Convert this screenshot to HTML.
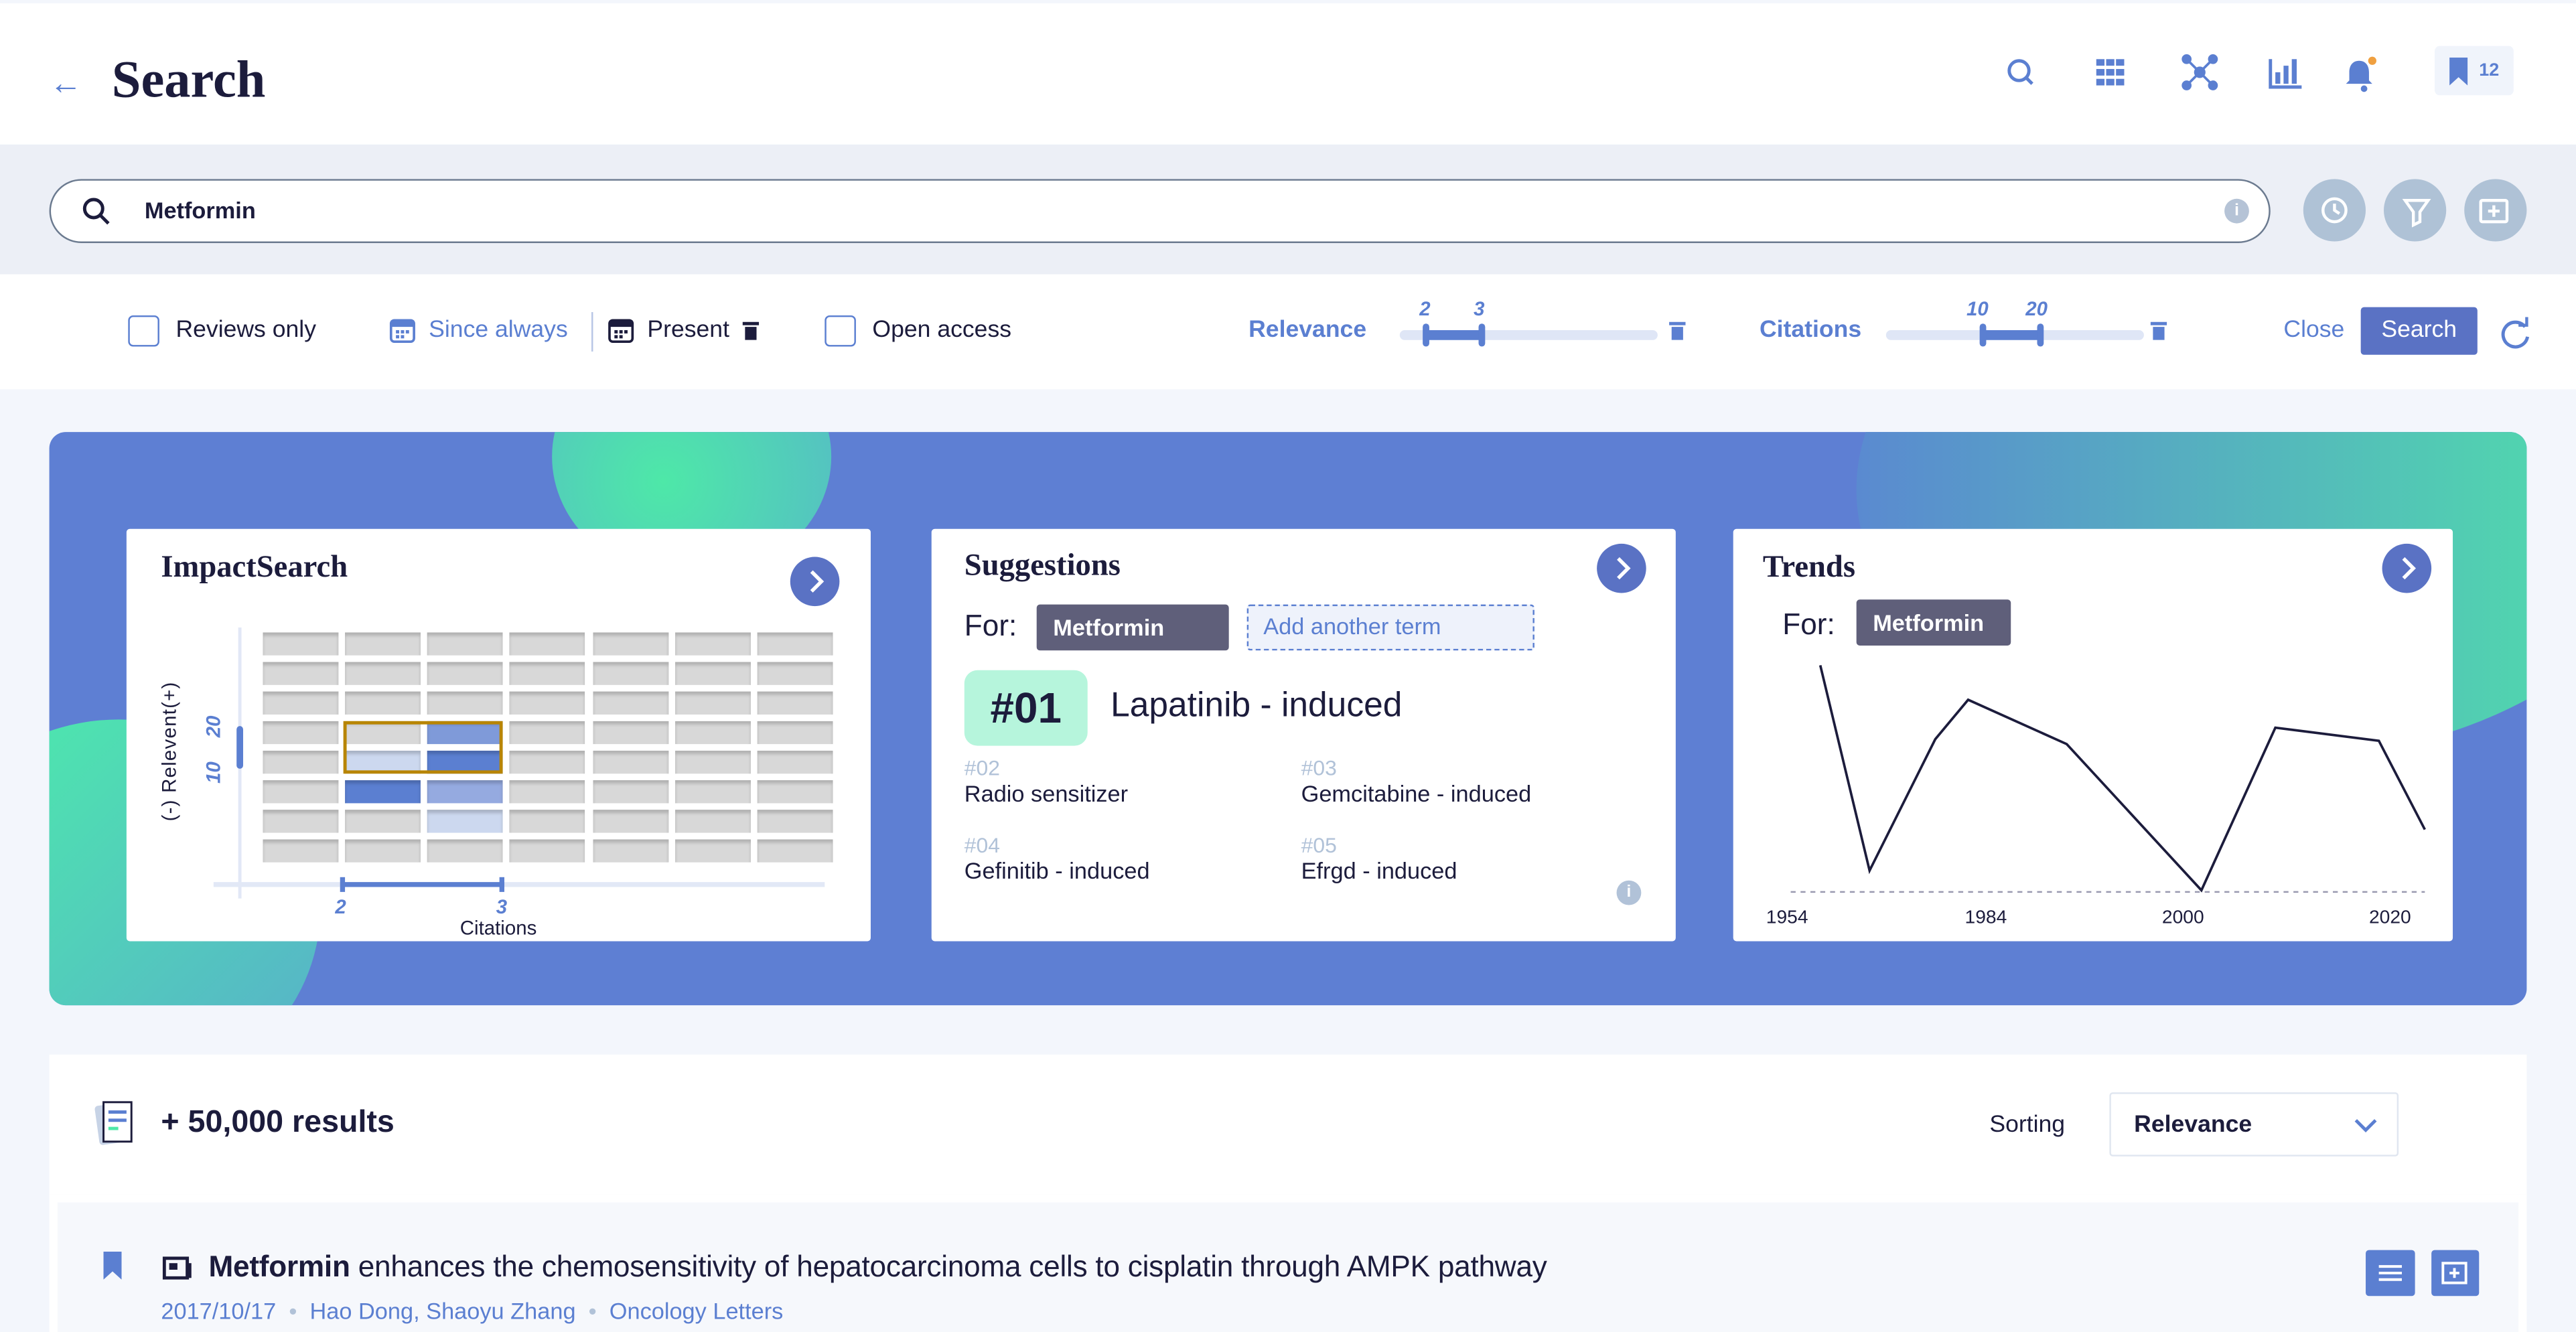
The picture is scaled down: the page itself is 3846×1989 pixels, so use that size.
<!DOCTYPE html>
<html><head><meta charset="utf-8">
<style>
*{box-sizing:border-box;margin:0;padding:0}
html,body{width:3846px;height:1989px;overflow:hidden;background:#f3f6fc}
#w{position:absolute;left:0;top:0;width:1568px;height:811px;transform:scale(2.4528);transform-origin:0 0;font-family:"Liberation Sans",sans-serif;color:#1c1c3c;background:#f3f6fc}
.a{position:absolute}
.serif{font-family:"Liberation Serif",serif;font-weight:bold}
.blue{color:#5b7fd1}
.cb{position:absolute;width:19px;height:19px;border:1.5px solid #5b7fd1;border-radius:3px;background:#fff}
.card{position:absolute;background:#fff;border-radius:2px;overflow:hidden}
.arrow{position:absolute;width:30px;height:30px;border-radius:50%;background:#5a72c4}
.cell{position:absolute;width:46px;height:14px;background:#d8d8d8;box-shadow:inset 0 2px 2px rgba(0,0,0,.18)}
.gb{position:absolute;width:38px;height:38px;border-radius:50%;background:#afc2d6}
</style></head><body><div id="w">
<!-- header -->
<div class="a" style="left:0;top:2px;width:1568px;height:86px;background:#fff"></div>
<div class="a blue" style="left:30px;top:40px;font-size:20px">&#8592;</div>
<div class="a serif" style="left:68px;top:30px;font-size:32px;color:#1c1c3c">Search</div>
<svg class="a" style="left:1218px;top:33px" width="320" height="24" viewBox="0 0 320 24" fill="none" stroke="#5b7fd1" stroke-width="2">
<circle cx="11" cy="10" r="6"/><path d="M15 14l4 4"/>
<g fill="#5b7fd1" stroke="none"><rect x="58" y="3" width="5" height="4"/><rect x="64" y="3" width="5" height="4"/><rect x="70" y="3" width="5" height="4"/><rect x="58" y="9" width="5" height="4"/><rect x="64" y="9" width="5" height="4"/><rect x="70" y="9" width="5" height="4"/><rect x="58" y="15" width="5" height="4"/><rect x="64" y="15" width="5" height="4"/><rect x="70" y="15" width="5" height="4"/></g>
<path d="M113 3l16 16M129 3l-16 16" stroke-width="1.5"/><g fill="#5b7fd1"><circle cx="121" cy="11" r="2.5"/><circle cx="113" cy="3" r="2"/><circle cx="129" cy="3" r="2"/><circle cx="113" cy="19" r="2"/><circle cx="129" cy="19" r="2"/></g>
<path d="M164 3v17h19"/><g fill="#5b7fd1" stroke="none"><rect x="167" y="11" width="3" height="7"/><rect x="172" y="7" width="3" height="11"/><rect x="177" y="3" width="3" height="15"/></g>
<path d="M218 4c-4 0-6 3-6 7v5l-2 2h16l-2-2v-5c0-4-2-7-6-7z" fill="#5b7fd1" stroke="none"/><circle cx="221" cy="21" r="2" fill="#5b7fd1" stroke="none"/><circle cx="226" cy="4" r="2.5" fill="#f0a040" stroke="none"/>
</svg>
<div class="a" style="left:1482px;top:28px;width:48px;height:30px;background:#f0f4fb;border-radius:3px"></div>
<svg class="a" style="left:1490px;top:35px" width="14" height="17"><path d="M1 0h11v17l-5.5-5L1 17z" fill="#5b7fd1"/></svg>
<div class="a blue" style="left:1509px;top:37px;font-size:11px;font-weight:bold">12</div>
<!-- search band -->
<div class="a" style="left:0;top:88px;width:1568px;height:79px;background:#eceff6"></div>
<div class="a" style="left:30px;top:109px;width:1352px;height:39px;border:1.5px solid #6b7a8f;border-radius:20px;background:#fff"></div>
<svg class="a" style="left:50px;top:120px" width="18" height="18" fill="none" stroke="#1c1c3c" stroke-width="2"><circle cx="7" cy="7" r="5.5"/><path d="M11 11l5 5"/></svg>
<div class="a" style="left:88px;top:120px;font-size:14px;font-weight:bold">Metformin</div>
<div class="a" style="left:1354px;top:121px;width:15px;height:15px;border-radius:50%;background:#b5c3d6;color:#fff;font-size:10px;text-align:center;line-height:15px;font-weight:bold">i</div>
<div class="gb" style="left:1402px;top:109px"></div><div class="gb" style="left:1451px;top:109px"></div><div class="gb" style="left:1500px;top:109px"></div>
<svg class="a" style="left:1402px;top:109px" width="140" height="38" fill="none" stroke="#fff" stroke-width="1.8"><circle cx="19" cy="19" r="7"/><path d="M19 15v4l3 2"/><path d="M62 13h14l-5 7v6l-4 2v-8z"/><rect x="108" y="13" width="16" height="13" rx="1"/><path d="M116 16v7M112.5 19.5h7"/></svg>
<!-- filter row -->
<div class="a" style="left:0;top:167px;width:1568px;height:70px;background:#fff"></div>
<div class="cb" style="left:78px;top:192px"></div>
<div class="a" style="left:107px;top:193px;font-size:14.5px">Reviews only</div>
<svg class="a" style="left:237px;top:193px" width="16" height="16" fill="#5b7fd1"><rect x="1" y="2" width="14" height="13" rx="2" fill="none" stroke="#5b7fd1" stroke-width="1.5"/><rect x="1" y="2" width="14" height="4"/><rect x="4" y="8" width="2" height="2"/><rect x="7" y="8" width="2" height="2"/><rect x="10" y="8" width="2" height="2"/><rect x="4" y="11" width="2" height="2"/><rect x="7" y="11" width="2" height="2"/></svg>
<div class="a blue" style="left:261px;top:193px;font-size:14.5px">Since always</div>
<div class="a" style="left:360px;top:190px;width:1px;height:24px;background:#b8c6e6"></div>
<svg class="a" style="left:370px;top:193px" width="16" height="16" fill="#1c1c3c"><rect x="1" y="2" width="14" height="13" rx="2" fill="none" stroke="#1c1c3c" stroke-width="1.5"/><rect x="1" y="2" width="14" height="4"/><rect x="4" y="8" width="2" height="2"/><rect x="7" y="8" width="2" height="2"/><rect x="10" y="8" width="2" height="2"/><rect x="4" y="11" width="2" height="2"/><rect x="7" y="11" width="2" height="2"/></svg>
<div class="a" style="left:394px;top:193px;font-size:14.5px">Present</div>
<svg class="a" style="left:452px;top:195px" width="10" height="12" fill="#1c1c3c"><rect x="0" y="1" width="10" height="2"/><rect x="1.5" y="4" width="7" height="8"/></svg>
<div class="cb" style="left:502px;top:192px"></div>
<div class="a" style="left:531px;top:193px;font-size:14.5px">Open access</div>
<div class="a blue" style="left:760px;top:193px;font-size:14.5px;font-weight:bold">Relevance</div>
<div class="a blue" style="left:864px;top:181px;font-size:12px;font-style:italic;font-weight:bold">2</div>
<div class="a blue" style="left:897px;top:181px;font-size:12px;font-style:italic;font-weight:bold">3</div>
<div class="a" style="left:852px;top:201px;width:157px;height:6px;background:#dfe6f6;border-radius:3px"></div>
<div class="a" style="left:868px;top:201px;width:35px;height:6px;background:#5b7fd1"></div>
<div class="a" style="left:866px;top:197px;width:4px;height:14px;background:#5b7fd1;border-radius:2px"></div>
<div class="a" style="left:900px;top:197px;width:4px;height:14px;background:#5b7fd1;border-radius:2px"></div>
<svg class="a" style="left:1016px;top:195px" width="10" height="12" fill="#5b7fd1"><rect x="0" y="1" width="10" height="2"/><rect x="1.5" y="4" width="7" height="8"/></svg>
<div class="a blue" style="left:1071px;top:193px;font-size:14.5px;font-weight:bold">Citations</div>
<div class="a blue" style="left:1197px;top:181px;font-size:12px;font-style:italic;font-weight:bold">10</div>
<div class="a blue" style="left:1233px;top:181px;font-size:12px;font-style:italic;font-weight:bold">20</div>
<div class="a" style="left:1148px;top:201px;width:157px;height:6px;background:#dfe6f6;border-radius:3px"></div>
<div class="a" style="left:1207px;top:201px;width:35px;height:6px;background:#5b7fd1"></div>
<div class="a" style="left:1205px;top:197px;width:4px;height:14px;background:#5b7fd1;border-radius:2px"></div>
<div class="a" style="left:1240px;top:197px;width:4px;height:14px;background:#5b7fd1;border-radius:2px"></div>
<svg class="a" style="left:1309px;top:195px" width="10" height="12" fill="#5b7fd1"><rect x="0" y="1" width="10" height="2"/><rect x="1.5" y="4" width="7" height="8"/></svg>
<div class="a blue" style="left:1390px;top:193px;font-size:14.5px">Close</div>
<div class="a" style="left:1437px;top:187px;width:71px;height:29px;background:#5a72c4;border-radius:2px;color:#fff;font-size:14.5px;text-align:center;line-height:29px">Search</div>
<svg class="a" style="left:1521px;top:193px" width="20" height="20" fill="none" stroke="#5b7fd1" stroke-width="2"><path d="M16 6A7.5 7.5 0 1 0 17.5 12"/><path d="M12 5h5V0" stroke-width="1.8"/></svg>
<!-- banner -->
<div class="a" style="left:30px;top:263px;width:1508px;height:349px;background:#5e7fd3;border-radius:10px;overflow:hidden">
 <div class="a" style="left:306px;top:-60px;width:170px;height:150px;border-radius:50%;background:radial-gradient(circle at 40% 60%,#4ee8a8,#56b8c8)"></div>
 <div class="a" style="left:-80px;top:175px;width:245px;height:230px;border-radius:50%;background:linear-gradient(135deg,#4cefa9,#58aecb)"></div>
 <div class="a" style="left:1100px;top:-130px;width:500px;height:330px;border-radius:50%;background:linear-gradient(90deg,#5a8ad0,#4fe4a8)"></div>
</div>
<!-- card 1 -->
<div class="card" style="left:77px;top:322px;width:453px;height:251px">
 <div class="a serif" style="left:21px;top:13px;font-size:19px">ImpactSearch</div>
 <div class="arrow" style="left:404px;top:17px"></div>
 <svg class="a" style="left:404px;top:17px" width="30" height="30" fill="none" stroke="#fff" stroke-width="2.2"><path d="M13 9l6 6-6 6"/></svg>
</div>
<div class="a" style="left:96px;top:500px;width:20px;transform-origin:0 0;transform:rotate(-90deg);white-space:nowrap;font-size:12px;letter-spacing:.5px">(-) Relevent(+)</div>
<div class="a blue" style="left:123px;top:477px;transform-origin:0 0;transform:rotate(-90deg);font-size:12px;font-style:italic;font-weight:bold">10</div>
<div class="a blue" style="left:123px;top:449px;transform-origin:0 0;transform:rotate(-90deg);font-size:12px;font-style:italic;font-weight:bold">20</div>
<div class="a" style="left:145px;top:382px;width:2px;height:165px;background:#e2e8f6"></div>
<div class="a" style="left:144px;top:442px;width:4px;height:26px;background:#5b7fd1;border-radius:2px"></div>
<div class="a" style="left:130px;top:537px;width:372px;height:3px;background:#e2e8f6"></div>
<div class="a" style="left:208px;top:537px;width:99px;height:3px;background:#5b7fd1"></div>
<div class="a" style="left:207px;top:534px;width:3px;height:9px;background:#5b7fd1"></div>
<div class="a" style="left:304px;top:534px;width:3px;height:9px;background:#5b7fd1"></div>
<div class="a blue" style="left:204px;top:545px;font-size:12px;font-style:italic;font-weight:bold">2</div>
<div class="a blue" style="left:302px;top:545px;font-size:12px;font-style:italic;font-weight:bold">3</div>
<div class="a" style="left:280px;top:558px;font-size:12px">Citations</div>
<div id="grid"></div>
<div class="a" style="left:209px;top:439px;width:97px;height:32px;border:2.5px solid #b88500"></div>
<!-- card 2 -->
<div class="card" style="left:567px;top:322px;width:453px;height:251px">
 <div class="a serif" style="left:20px;top:12px;font-size:19px">Suggestions</div>
 <div class="arrow" style="left:405px;top:9px"></div>
 <svg class="a" style="left:405px;top:9px" width="30" height="30" fill="none" stroke="#fff" stroke-width="2.2"><path d="M13 9l6 6-6 6"/></svg>
 <div class="a" style="left:20px;top:49px;font-size:18px">For:</div>
 <div class="a" style="left:64px;top:46px;width:117px;height:28px;background:#5f5f7a;border-radius:2px;color:#fff;font-size:14px;font-weight:bold;line-height:28px;padding-left:10px">Metformin</div>
 <div class="a blue" style="left:192px;top:46px;width:175px;height:28px;background:#eef2fb;border:1.5px dashed #5b7fd1;border-radius:2px;font-size:14px;line-height:25px;padding-left:9px">Add another term</div>
 <div class="a" style="left:20px;top:86px;width:75px;height:46px;background:#b6f5dc;border-radius:8px;font-size:26px;font-weight:bold;text-align:center;line-height:46px">#01</div>
 <div class="a" style="left:109px;top:96px;font-size:21px">Lapatinib - induced</div>
 <div class="a" style="left:20px;top:138px;font-size:13px;color:#b1c2d8">#02</div>
 <div class="a" style="left:20px;top:153px;font-size:14px">Radio sensitizer</div>
 <div class="a" style="left:225px;top:138px;font-size:13px;color:#b1c2d8">#03</div>
 <div class="a" style="left:225px;top:153px;font-size:14px">Gemcitabine - induced</div>
 <div class="a" style="left:20px;top:185px;font-size:13px;color:#b1c2d8">#04</div>
 <div class="a" style="left:20px;top:200px;font-size:14px">Gefinitib - induced</div>
 <div class="a" style="left:225px;top:185px;font-size:13px;color:#b1c2d8">#05</div>
 <div class="a" style="left:225px;top:200px;font-size:14px">Efrgd - induced</div>
 <div class="a" style="left:417px;top:214px;width:15px;height:15px;border-radius:50%;background:#b1c2d8;color:#fff;font-size:10px;font-weight:bold;text-align:center;line-height:15px">i</div>
</div>
<!-- card 3 -->
<div class="card" style="left:1055px;top:322px;width:438px;height:251px">
 <div class="a serif" style="left:18px;top:13px;font-size:19px">Trends</div>
 <div class="arrow" style="left:395px;top:9px"></div>
 <svg class="a" style="left:395px;top:9px" width="30" height="30" fill="none" stroke="#fff" stroke-width="2.2"><path d="M13 9l6 6-6 6"/></svg>
 <div class="a" style="left:30px;top:48px;font-size:18px">For:</div>
 <div class="a" style="left:75px;top:43px;width:94px;height:28px;background:#5f5f7a;border-radius:2px;color:#fff;font-size:14px;font-weight:bold;line-height:28px;padding-left:10px">Metformin</div>
 <svg class="a" style="left:0;top:0" width="438" height="251" fill="none"><path d="M35 221H421" stroke="#9a9ab0" stroke-width="1" stroke-dasharray="3 3"/><polyline points="53,83 83,208 123,128 143,104 203,131 285,220 330,121 393,129 421,183" stroke="#1c1c3c" stroke-width="1.5"/></svg>
 <div class="a" style="left:20px;top:231px;font-size:11.5px">1954</div>
 <div class="a" style="left:141px;top:231px;font-size:11.5px">1984</div>
 <div class="a" style="left:261px;top:231px;font-size:11.5px">2000</div>
 <div class="a" style="left:387px;top:231px;font-size:11.5px">2020</div>
</div>
<!-- results -->
<div class="a" style="left:30px;top:642px;width:1508px;height:85px;background:#fff"></div>
<div class="a" style="left:30px;top:727px;width:1508px;height:84px;background:#fff"></div>
<svg class="a" style="left:57px;top:668px" width="28" height="32"><rect x="2" y="4" width="20" height="24" rx="2" fill="#c7d3e6" transform="rotate(-8 12 16)"/><rect x="6" y="3" width="17" height="24" fill="#fff" stroke="#1c1c3c" stroke-width="1.2"/><rect x="9" y="8" width="11" height="2" fill="#5b7fd1"/><rect x="9" y="13" width="11" height="2" fill="#5b7fd1"/><rect x="9" y="18" width="6" height="2" fill="#4ee8a8"/></svg>
<div class="a" style="left:98px;top:673px;font-size:19px;font-weight:bold">+ 50,000 results</div>
<div class="a" style="left:1211px;top:677px;font-size:14.5px">Sorting</div>
<div class="a" style="left:1284px;top:665px;width:176px;height:39px;border:1.5px solid #e0e6f0;border-radius:2px;background:#fff"></div>
<div class="a" style="left:1299px;top:677px;font-size:14.5px;font-weight:bold">Relevance</div>
<svg class="a" style="left:1433px;top:680px" width="14" height="10" fill="none" stroke="#5b7fd1" stroke-width="2"><path d="M1 2l6 6 6-6"/></svg>
<div class="a" style="left:35px;top:732px;width:1498px;height:79px;background:#f6f8fc"></div>
<svg class="a" style="left:62px;top:762px" width="14" height="17"><path d="M1 0h11v17l-5.5-5L1 17z" fill="#5b7fd1"/></svg>
<svg class="a" style="left:99px;top:765px" width="18" height="14"><rect x="1" y="1" width="14" height="12" fill="none" stroke="#1c1c3c" stroke-width="2"/><rect x="4" y="4" width="5" height="4" fill="#1c1c3c"/><rect x="15" y="4" width="2.5" height="9" fill="#1c1c3c"/></svg>
<div class="a" style="left:127px;top:761px;font-size:18px;letter-spacing:-0.1px"><b>Metformin</b> enhances the chemosensitivity of hepatocarcinoma cells to cisplatin through AMPK pathway</div>
<div class="a blue" style="left:98px;top:790px;font-size:14px">2017/10/17 <span style="color:#b1c2d8">&nbsp;•&nbsp;</span> Hao Dong, Shaoyu Zhang <span style="color:#b1c2d8">&nbsp;•&nbsp;</span> Oncology Letters</div>
<div class="a" style="left:1440px;top:761px;width:30px;height:28px;background:#5b7fd1;border-radius:2px"></div>
<div class="a" style="left:1480px;top:761px;width:29px;height:28px;background:#5b7fd1;border-radius:2px"></div>
<svg class="a" style="left:1440px;top:761px" width="70" height="28" fill="none" stroke="#fff" stroke-width="1.6"><path d="M8 10h14M8 14h14M8 18h14"/><rect x="47" y="8" width="14" height="12"/><path d="M54 11v6M51 14h6"/></svg>
</div>
<script>
var g=document.getElementById('grid'),xs=[160,210,260,310,361,411,461],h='';
var col={'3,2':'#7f9ad9','4,1':'#ccd8ef','4,2':'#5b7fd1','5,1':'#5b7fd1','5,2':'#95aae0','6,2':'#ccd8ef'};
for(var r=0;r<8;r++)for(var c=0;c<7;c++){var y=385+r*18,k=r+','+c;h+='<div class="cell" style="left:'+xs[c]+'px;top:'+y+'px;'+(col[k]?'background:'+col[k]+';':'')+'"></div>';}
g.innerHTML=h;
</script>
</body></html>
